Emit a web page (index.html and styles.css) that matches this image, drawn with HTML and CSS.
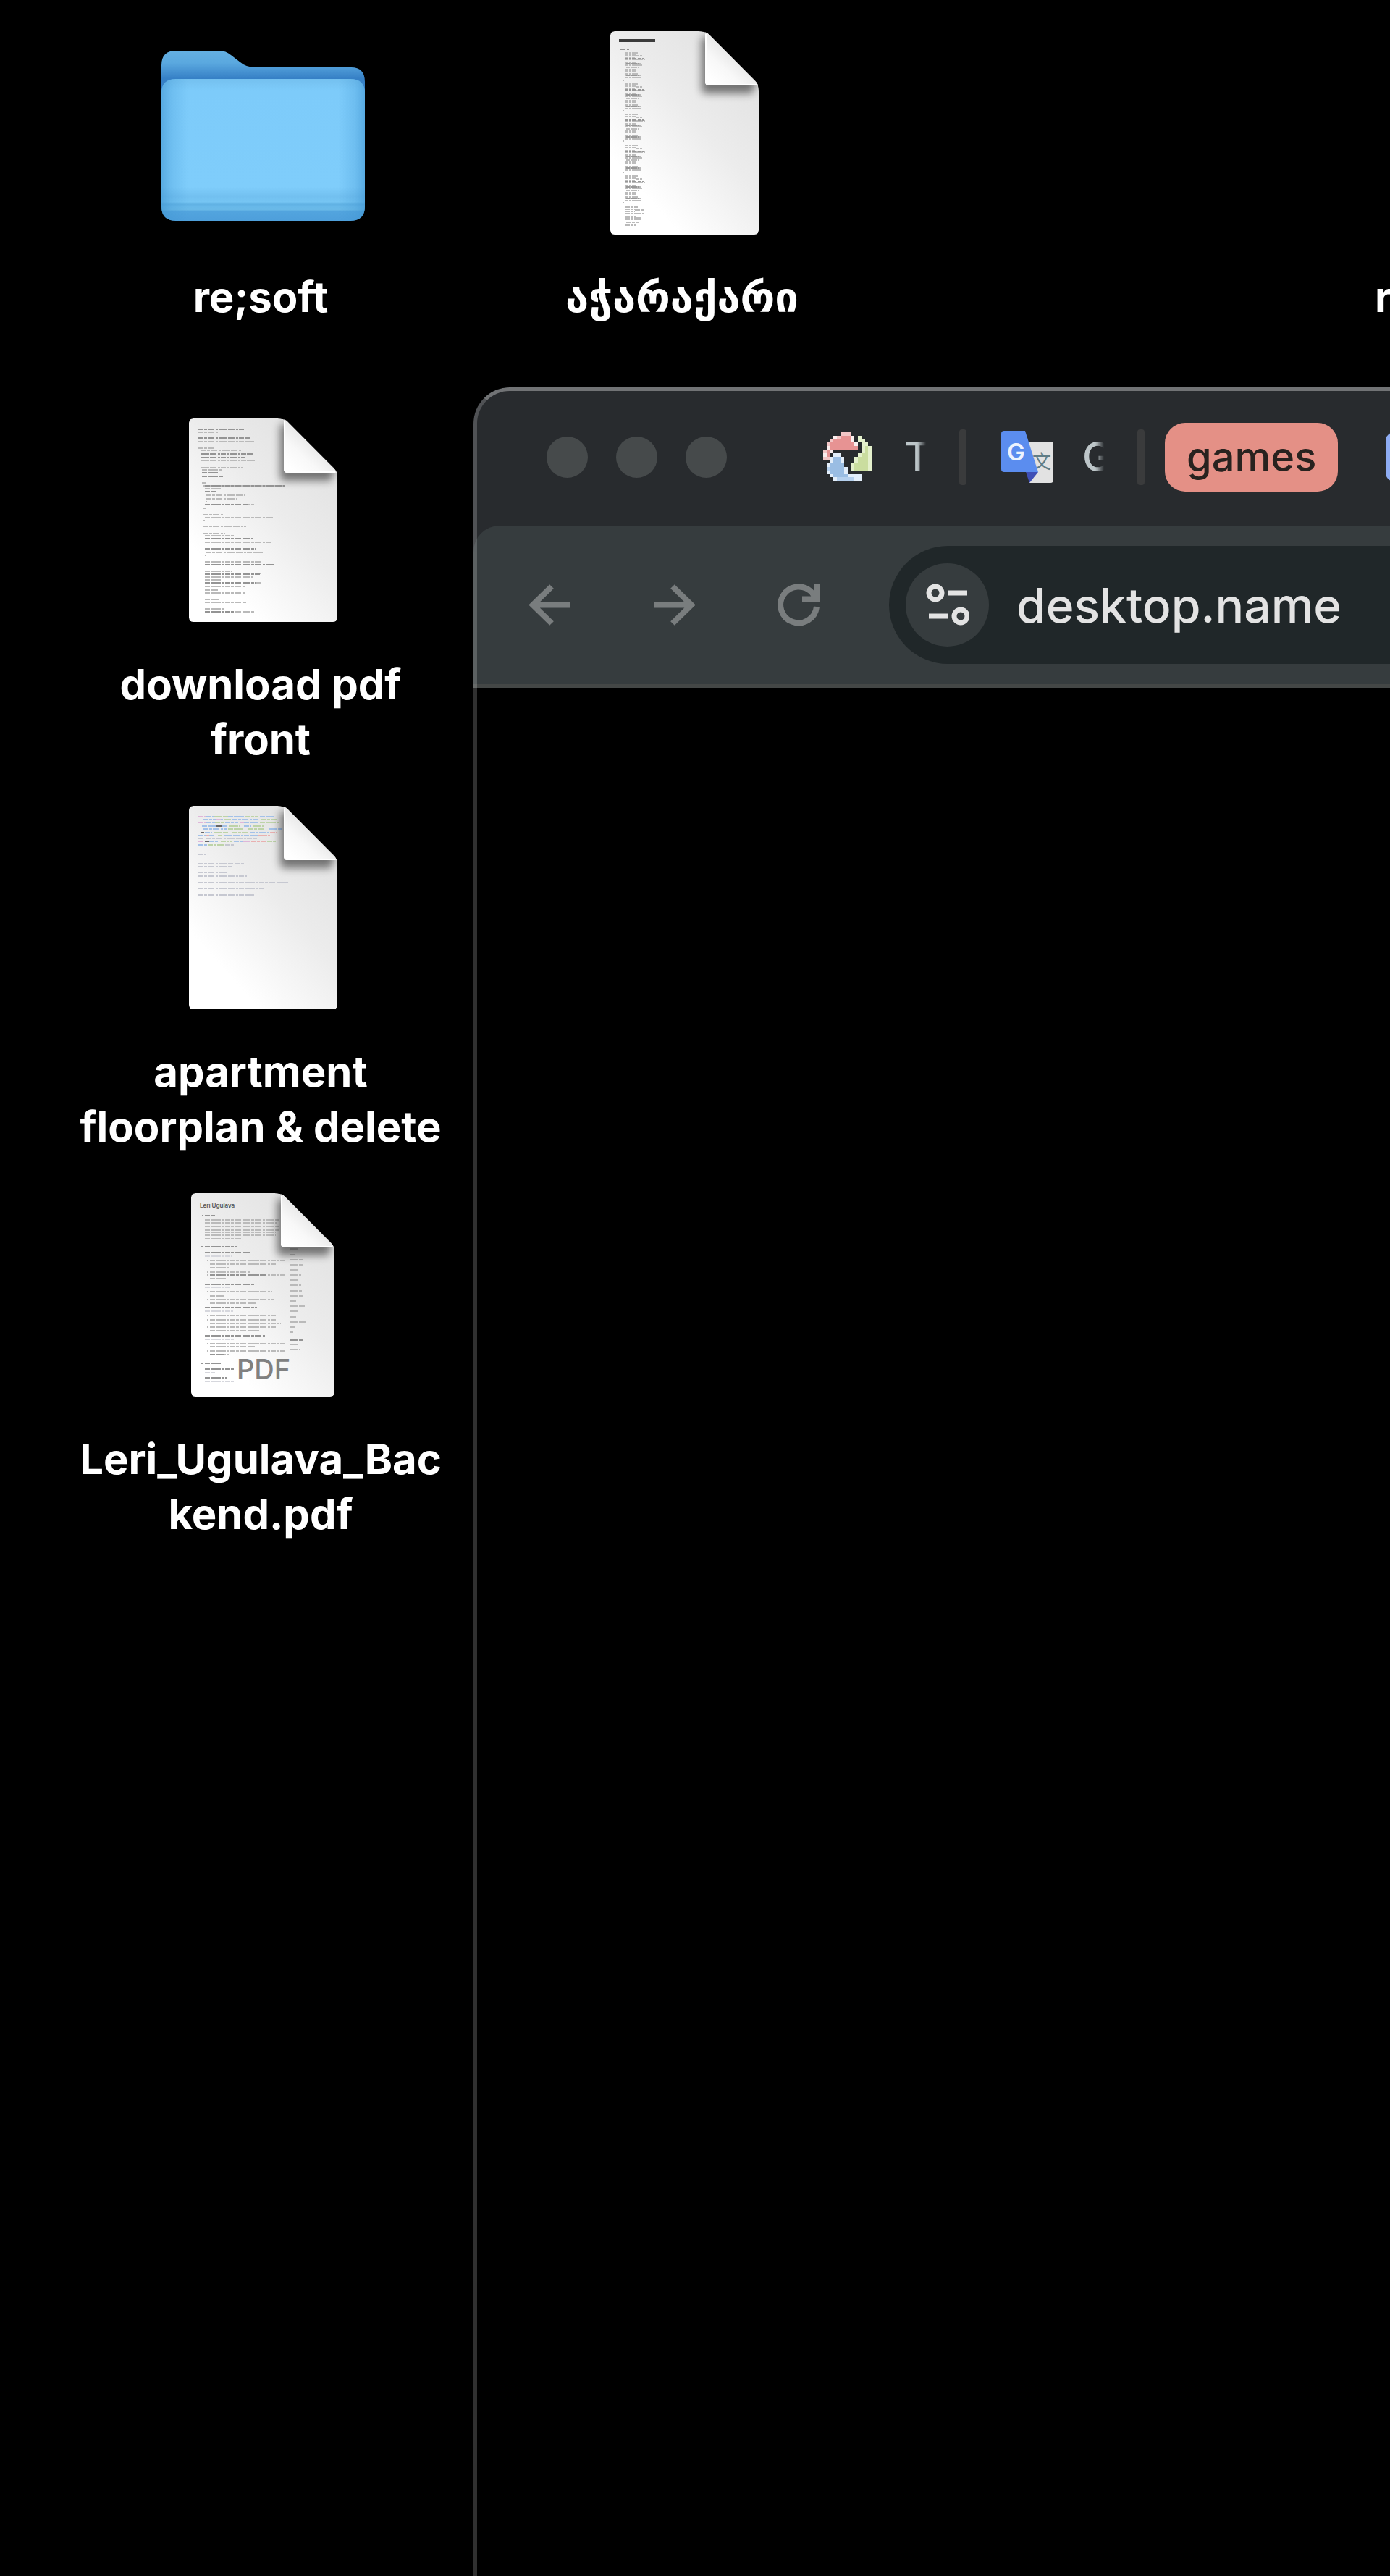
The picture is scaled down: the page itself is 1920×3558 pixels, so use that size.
FILE: index.html
```html
<!DOCTYPE html>
<html lang="en">
<head>
    <meta charset="UTF-8">
    <meta name="viewport" content="width=device-width, initial-scale=1.0">
    <title>Desktop</title>
    <link rel="stylesheet" href="styles.css">
</head>
<body>

    <!-- Shared shapes for the file icons -->
    <svg class="defs" aria-hidden="true">
        <defs>
            <linearGradient id="paper" x1="0.85" y1="0.1" x2="0.15" y2="0.95">
                <stop offset="0" stop-color="#e2e2e2"/>
                <stop offset="0.4" stop-color="#ececec"/>
                <stop offset="0.85" stop-color="#ffffff"/>
            </linearGradient>
            <linearGradient id="foldFill" x1="0.65" y1="0.3" x2="0.1" y2="0.9">
                <stop offset="0" stop-color="#dedede"/>
                <stop offset="0.6" stop-color="#f8f8f8"/>
                <stop offset="1" stop-color="#ffffff"/>
            </linearGradient>
            <filter id="soft" x="-50%" y="-50%" width="200%" height="200%">
                <feGaussianBlur stdDeviation="6"/>
            </filter>
            <path id="page" d="M6 0H122Q131 0 136 4L200 68Q205 73 205 82V275Q205 281 199 281H6Q0 281 0 275V6Q0 0 6 0Z"/>
            <path id="pagePdf" d="M6 0H115Q124 0 129 4L193 68Q198 73 198 82V275Q198 281 192 281H6Q0 281 0 275V6Q0 0 6 0Z"/>
            <clipPath id="pageClip"><use href="#page"/></clipPath>
            <clipPath id="pagePdfClip"><use href="#pagePdf"/></clipPath>
            <g id="fold">
                <path d="M126 10V80Q126 86 132 86H196L202 70L134 6Z" fill="#000" opacity="0.5" filter="url(#soft)"/>
                <path d="M131 0V70Q131 75 136 75H206L132 0Z" fill="url(#foldFill)"/>
                <path d="M132 4V70Q132 74 136 74H202" fill="none" stroke="#fff" stroke-width="2"/>
            </g>
            <g id="block">
                <path d="M20 2h18M20 5h16M20 9h14M35 6h10M20 11h28M20 15h16M20 17h22M20 19h24M22 22h18M20 25h16M20 27h16M20 31h18M20 33h23M20 36h22"/>
                <path class="dark" d="M20 10h15M38 10h9M22 17h18M22 33h18"/>
            </g>
        </defs>
    </svg>

    <div class="desktop">
        <!-- Files -->
        <a class="file" href="#">
            <svg class="icon" width="281" height="281" viewBox="0 0 281 281" aria-hidden="true">
                <defs>
                    <linearGradient id="folderBack" x1="0" y1="0" x2="0" y2="1">
                        <stop offset="0" stop-color="#64b0e2"/>
                        <stop offset="0.08" stop-color="#5aa8df"/>
                        <stop offset="0.18" stop-color="#3680c6"/>
                        <stop offset="1" stop-color="#4a9bd8"/>
                    </linearGradient>
                    <linearGradient id="folderFront" x1="0" y1="0" x2="0" y2="1">
                        <stop offset="0" stop-color="#74c0ef"/>
                        <stop offset="0.08" stop-color="#7dcbfa"/>
                        <stop offset="0.76" stop-color="#7fcdfb"/>
                        <stop offset="0.83" stop-color="#72c0f0"/>
                        <stop offset="0.865" stop-color="#76c5f3"/>
                        <stop offset="0.885" stop-color="#61b2e4"/>
                        <stop offset="0.9" stop-color="#67b8e9"/>
                        <stop offset="0.92" stop-color="#6bbae8"/>
                        <stop offset="0.935" stop-color="#52a4de"/>
                        <stop offset="1" stop-color="#4e9fdb"/>
                    </linearGradient>
                    <linearGradient id="folderSides">
                        <stop offset="0" stop-color="#3f95d2" stop-opacity="0.6"/>
                        <stop offset="0.05" stop-color="#3f95d2" stop-opacity="0.25"/>
                        <stop offset="0.13" stop-color="#3f95d2" stop-opacity="0"/>
                        <stop offset="0.87" stop-color="#3f95d2" stop-opacity="0"/>
                        <stop offset="0.95" stop-color="#3f95d2" stop-opacity="0.25"/>
                        <stop offset="1" stop-color="#3f95d2" stop-opacity="0.6"/>
                    </linearGradient>
                    <path id="front" d="M0 86Q0 66 20 66H261Q281 66 281 86V242Q281 262 261 262H20Q0 262 0 242Z"/>
                </defs>
                <path d="M0 47Q0 27 20 27H80Q89 27 96 33L109 43Q117 50 130 50H262Q281 50 281 70V240H0Z" fill="url(#folderBack)"/>
                <use href="#front" fill="url(#folderFront)"/>
                <use href="#front" fill="url(#folderSides)"/>
            </svg>
            <span class="label">re;soft</span>
        </a>

        <a class="file" href="#">
            <svg class="icon" width="205" height="281" viewBox="0 0 205 281" aria-hidden="true">
                <g clip-path="url(#pageClip)">
                    <use href="#page" fill="url(#paper)"/>
                    <path d="M12 13h50" stroke="#3c3c3c" stroke-width="4"/>
                    <g class="lines">
                        <path class="dark" d="M14 25h8M23 25h3"/>
                        <use href="#block" y="28"/>
                        <use href="#block" y="71"/>
                        <use href="#block" y="113"/>
                        <use href="#block" y="156"/>
                        <use href="#block" y="198"/>
                        <path d="M20 243h18M20 246h16M20 249h14M34 247h12M20 252h28M20 256h16M20 258h22M20 260h24M22 264h18M20 268h16"/>
                        <path d="M18 68h1M18 110h1M18 152h1M18 195h1M18 237h1"/>
                    </g>
                    <use href="#fold"/>
                </g>
            </svg>
            <span class="label">აჭარაქარი</span>
        </a>

        <!-- Starts a column further right and runs off the screen -->
        <a class="file file-edge" href="#">
            <span class="label">r</span>
        </a>

        <a class="file file-first" href="#">
            <svg class="icon" width="205" height="281" viewBox="0 0 205 281" aria-hidden="true">
                <g clip-path="url(#pageClip)">
                    <use href="#page" fill="url(#paper)"/>
                    <g class="lines">
                        <path d="M13 19h28M13 32h77M13 41h24M17 44h56M16 58h75M16 68h58M18 71h27M18 89h5M20 93h113M22 97h23M24 106h53M24 111h42M23 115h2M22 119h68M20 124h3M20 133h27M22 137h94M20 141h2M20 149h59M20 159h30M22 162h41M22 171h92M24 185h78M22 189h2M22 198h80M22 211h38M22 214h78M22 219h67M22 223h22M22 227h80M22 232h55M22 237h18M22 241h55M22 250h20M22 254h57M22 263h28M22 267h69"/>
                        <path class="dark" d="M13 15h63M13 27h71M16 49h73M16 54h62M18 75h23M18 80h29M22 93h111M22 101h15M22 119h60M22 166h66M22 180h71M22 202h97M22 215h76M22 227h70M22 267h40"/>
                    </g>
                    <use href="#fold"/>
                </g>
            </svg>
            <span class="label">download pdf front</span>
        </a>

        <a class="file file-first" href="#">
            <svg class="icon" width="205" height="281" viewBox="0 0 205 281" aria-hidden="true">
                <g clip-path="url(#pageClip)">
                    <use href="#page" fill="url(#paper)"/>
                    <g class="code">
                        <path stroke="#a3c1e8" d="M24 15h10M54 15h22M98 15h20M20 19h28M60 19h36M24 23h12M50 23h18M76 23h20M18 28h20M46 28h8M76 28h10M20 32h32M110 32h18M22 37h10M84 37h26M13 41h24M48 41h60M28 49h14M62 49h12M13 54h12"/>
                        <path stroke="#bdd3a8" d="M34 15h20M78 15h18M48 19h10M100 19h24M36 23h12M98 23h28M56 28h14M88 28h16M54 32h20M82 32h22M34 37h20M60 37h22M40 41h6M44 49h16M108 49h14M26 54h22"/>
                        <path stroke="#dfb6d9" d="M13 15h10M13 23h10M38 19h6M70 23h6M13 49h7M74 49h10"/>
                        <path stroke="#e9b0b0" d="M86 49h20M96 41h16M112 37h10M24 41h4"/>
                        <path stroke="#666" d="M38 28h7M17 37h4M22 49h6"/>
                        <path stroke="#c6c8d1" d="M13 45h8M24 45h70M50 54h14M13 67h10M13 80h48M64 80h12M13 84h46M13 92h39M13 97h67M13 106h125M13 114h90M13 123h77"/>
                    </g>
                    <use href="#fold"/>
                </g>
            </svg>
            <span class="label">apartment floorplan &amp; delete</span>
        </a>

        <a class="file file-first" href="#">
            <svg class="icon" width="198" height="281" viewBox="0 0 198 281" aria-hidden="true">
                <g clip-path="url(#pagePdfClip)">
                    <use href="#pagePdf" fill="url(#paper)"/>
                    <text class="thumb-title" x="12" y="20">Leri Ugulava</text>
                    <g class="lines">
                        <path d="M19 37h103M19 41h100M19 46h103M19 51h103M19 54h98M19 58h98M19 63h50M26 93h103M26 98h92M26 103h28M26 109h55M26 113h103M26 118h23M26 136h86M26 142h20M26 147h88M26 152h64M26 169h93M26 175h92M26 180h98M26 185h91M26 190h68M26 208h103M26 212h62M26 218h103M26 223h26"/>
                        <path d="M22 93h2M22 109h2M22 113h2M22 136h2M22 147h2M22 169h2M22 175h2M22 185h2M22 208h2M22 218h2"/>
                        <path class="dark" d="M15 31h1M19 31h14M14 74h2M19 74h45M19 82h64M19 126h68M19 158h72M19 197h83M14 235h2M19 235h22M19 243h42M19 255h31M26 113h80M26 223h20"/>
                        <path d="M136 77h12M136 85h7M136 92h18M136 99h18M136 106h13M136 113h16M136 120h12M136 127h16M136 135h17M136 142h18M136 149h9M136 156h21M136 163h12M136 171h9M136 178h22M136 185h8M136 192h5M136 209h12M136 216h15"/>
                        <path class="dark" d="M136 203h18"/>
                        <path class="faint" d="M19 87h37M19 130h35M19 163h39M19 202h41M19 248h14M19 260h40"/>
                    </g>
                    <text class="thumb-type" x="100" y="257">PDF</text>
                    <use href="#fold" x="-7"/>
                </g>
            </svg>
            <span class="label">Leri_Ugulava_Backend.pdf</span>
        </a>
    </div>

    <!-- Browser window -->
    <div class="window">
        <div class="chrome">
            <div class="tabstrip">
                <div class="lights">
                    <button class="light" type="button" aria-label="Close"></button>
                    <button class="light" type="button" aria-label="Minimize"></button>
                    <button class="light" type="button" aria-label="Zoom"></button>
                </div>

                <button class="tab" type="button">
                    <svg class="favicon" viewBox="0 -0.4 15 15" shape-rendering="crispEdges" aria-hidden="true">
                        <path fill="#f3c6c6" d="M5 0h3v1H5zM3 1h1v1H3zM2 2h1v1H2zM1 3h1v1H1zM0 5h1v3H0zM1 7h1v1H1zM4 1h1v1H4z"/>
                        <path fill="#e79393" d="M5 1h3v1H5zM3 2h5v1H3zM2 3h7v1H2zM1 4h9v1H1zM1 5h1v2H1zM9 3h1v1H9z"/>
                        <path fill="#fbeeee" d="M8 1h1v2H8zM1 4h1v1H1zM2 5h1v1H2zM0 6h1v1H0zM3 1h1v1H3zM9 3h1v1H9z"/>
                        <path fill="#e4f0cc" d="M10 1h1v2H10zM11 2h1v2H11zM12 3h1v1H12zM13 4h1v7H13zM10 6h1v1H10zM9 7h1v2H9zM8 9h1v2H8zM11 4h1v2H11z"/>
                        <path fill="#cadd9f" d="M12 4h1v7H12zM11 6h1v5H11zM10 7h1v4H10zM9 9h1v2H9z"/>
                        <path fill="#e3eefa" d="M3 6h2v1H3zM2 7h1v2H2zM1 9h1v3H1zM5 7h1v2H5zM6 10h1v2H6zM2 12h1v1H2zM3 13h1v1H3zM9 12h2v2H9zM7 12h2v1H7z"/>
                        <path fill="#9abde3" d="M3 7h2v6H3zM2 9h1v3H2zM5 9h1v4H5zM6 12h1v1H6z"/>
                        <path fill="#b5d0ee" d="M4 13h5v1H4zM1 10h1v1H1z"/>
                    </svg>
                    <span class="tab-title">T</span>
                </button>
                <span class="separator"></span>

                <button class="tab" type="button">
                    <svg class="favicon" viewBox="0 0 72 72" aria-hidden="true">
                        <path d="M30 15H68Q72 15 72 19V68Q72 72 68 72H39Z" fill="#e2e2e2"/>
                        <path d="M38 15L53 60L46 40Z" fill="#c4c4c4"/>
                        <text class="wen" x="43" y="52">文</text>
                        <path d="M34 57H51L39 72Z" fill="#3f4fb5"/>
                        <path d="M4 0H33L51 57H4Q0 57 0 53V4Q0 0 4 0Z" fill="#5b8def"/>
                        <text class="gee" x="8" y="41">G</text>
                    </svg>
                    <span class="tab-title">G</span>
                </button>
                <span class="separator separator-last"></span>

                <button class="group" type="button">games</button>
                <button class="tab tab-blue" type="button" aria-label="Tab"></button>
            </div>

            <div class="toolbar">
                <div class="nav">
                    <button class="nav-btn" type="button" aria-label="Back">
                        <svg viewBox="0 0 57 57" aria-hidden="true"><path d="M57 28.5H6M31 3L5 28.5L31 54"/></svg>
                    </button>
                    <button class="nav-btn" type="button" aria-label="Forward">
                        <svg viewBox="0 0 57 57" aria-hidden="true"><path d="M0 28.5H51M26 3L52 28.5L26 54"/></svg>
                    </button>
                    <button class="nav-btn" type="button" aria-label="Reload">
                        <svg viewBox="0 0 57 57" aria-hidden="true"><path d="M53 31A25 25 0 1 1 47 12L53 20M53.500 0V20.500H33"/></svg>
                    </button>
                </div>
                <div class="omnibox">
                    <button class="site-info" type="button" aria-label="Site information">
                        <svg viewBox="0 0 60 57" aria-hidden="true">
                            <circle cx="13" cy="12" r="9"/>
                            <circle cx="48" cy="44" r="9"/>
                            <path d="M30 12H57M4 44H30"/>
                        </svg>
                    </button>
                    <input class="address" type="text" value="desktop.name" aria-label="Address">
                </div>
            </div>
        </div>
    </div>

</body>
</html>
```
FILE: styles.css
```css
* {
    box-sizing: border-box;
}

body {
    margin: 0;
    position: relative;
    min-height: 100vh;
    overflow: hidden;
    background: #000;
    color: #fff;
    font-family: Inter, "DejaVu Sans", sans-serif;
}

button,
input {
    margin: 0;
    padding: 0;
    border: 0;
    background: none;
    color: inherit;
    font: inherit;
}

.defs {
    position: absolute;
    width: 0;
    height: 0;
}

/* Desktop files */
.desktop {
    display: grid;
    grid-template-columns: repeat(3, 582px) minmax(0, 1fr);
    grid-auto-rows: 535px;
    padding: 43px 0 0 69px;
    overflow: hidden;
}

.file {
    display: flex;
    flex-direction: column;
    align-items: center;
    gap: 48px;
    color: #fff;
    text-decoration: none;
}

.file-first {
    grid-column: 1;
}

.file-edge {
    grid-column: 4;
    align-items: flex-start;
    padding: 329px 0 0 84px;
}

.icon {
    display: block;
    flex: none;
    margin-left: 6px;
}

.label {
    max-width: 524px;
    font-size: 58px;
    font-weight: 700;
    line-height: 76px;
    text-align: center;
    overflow-wrap: anywhere;
}

/* Tiny text lines on the thumbnails */
.lines path,
.code path {
    fill: none;
    stroke-width: 2;
    stroke-dasharray: 7 1 4 1 9 2 3 1;
}

.lines path {
    stroke: #bababa;
}

.lines .dark {
    stroke: #949494;
}

.lines .faint {
    stroke: #d6d7dd;
}

#block path {
    stroke: #bcbcbc;
    stroke-width: 2;
    stroke-dasharray: 5 1 3 1;
}

#block .dark {
    stroke: #989898;
}

.thumb-title {
    font-size: 8px;
    font-weight: 600;
    fill: #555;
}

.thumb-type {
    font-size: 38px;
    font-weight: 500;
    text-anchor: middle;
    fill: #808080;
}

/* Browser window */
.window {
    position: absolute;
    top: 535px;
    left: 654px;
    right: 0;
    bottom: 0;
    overflow: hidden;
    border-top-left-radius: 50px;
    background: #000;
}

/* Light edge over the window */
.window::after {
    content: "";
    position: absolute;
    inset: 0;
    border: solid rgba(255, 255, 255, 0.19);
    border-width: 5px 0 0 5px;
    border-top-color: rgba(255, 255, 255, 0.34);
    border-top-left-radius: 50px;
    pointer-events: none;
}

.chrome {
    background: #282b2e;
}

.tabstrip {
    display: flex;
    align-items: center;
    height: 191px;
    padding: 5px 0 4px 101px;
    overflow: hidden;
}

.lights {
    display: flex;
    flex: none;
    gap: 39px;
    margin-right: 133px;
}

.light {
    width: 57px;
    height: 57px;
    border-radius: 50%;
    background: #464a4b;
}

.tab {
    display: flex;
    flex: none;
    align-items: center;
    gap: 40px;
}

.favicon {
    display: block;
    flex: none;
    width: 72px;
    height: 72px;
}

.tab-title {
    width: 30px;
    overflow: hidden;
    color: #bdc6c9;
    font-size: 56px;
    font-weight: 500;
    line-height: 68px;
    text-align: left;
    mask-image: linear-gradient(to right, #000 60%, transparent);
}

.separator {
    flex: none;
    width: 10px;
    height: 77px;
    margin: 0 48px 0 46px;
    border-radius: 4px;
    background: #3a3b3c;
}

.separator-last {
    margin-right: 28px;
}

.group {
    flex: none;
    height: 95px;
    padding: 0 30px;
    border-radius: 28px;
    background: #e49086;
    color: #28221f;
    font-size: 56px;
    font-weight: 500;
}

.tab-blue {
    width: 72px;
    height: 68px;
    margin-left: 66px;
    border-radius: 12px;
    background: #8eacf3;
}

.gee {
    font-size: 33px;
    font-weight: 600;
    fill: #eef3fe;
}

.wen {
    font-family: "Noto Sans CJK SC", sans-serif;
    font-size: 26px;
    fill: #607d86;
}

.toolbar {
    display: flex;
    align-items: center;
    height: 224px;
    padding-left: 77px;
    border-bottom: 5px solid #444746;
    border-top-left-radius: 36px;
    background: #363c3e;
}

.nav {
    display: flex;
    flex: none;
    gap: 115px;
    margin-right: 96px;
}

.nav-btn {
    width: 57px;
    height: 57px;
}

.nav-btn svg {
    display: block;
    fill: none;
    stroke: #797d7e;
    stroke-width: 8;
}

.omnibox {
    display: flex;
    flex: 1;
    align-items: center;
    gap: 38px;
    height: 163px;
    padding-left: 23px;
    border-radius: 82px 0 0 82px;
    background: #202729;
}

.site-info {
    display: flex;
    flex: none;
    align-items: center;
    justify-content: center;
    width: 115px;
    height: 115px;
    border-radius: 50%;
    background: #363c3e;
}

.site-info svg {
    width: 60px;
    height: 57px;
    fill: none;
    stroke: #e3e3e3;
    stroke-width: 7;
}

.address {
    flex: 1;
    min-width: 0;
    color: #e3e3e3;
    font-size: 66px;
    font-weight: 500;
    outline: none;
}
```
